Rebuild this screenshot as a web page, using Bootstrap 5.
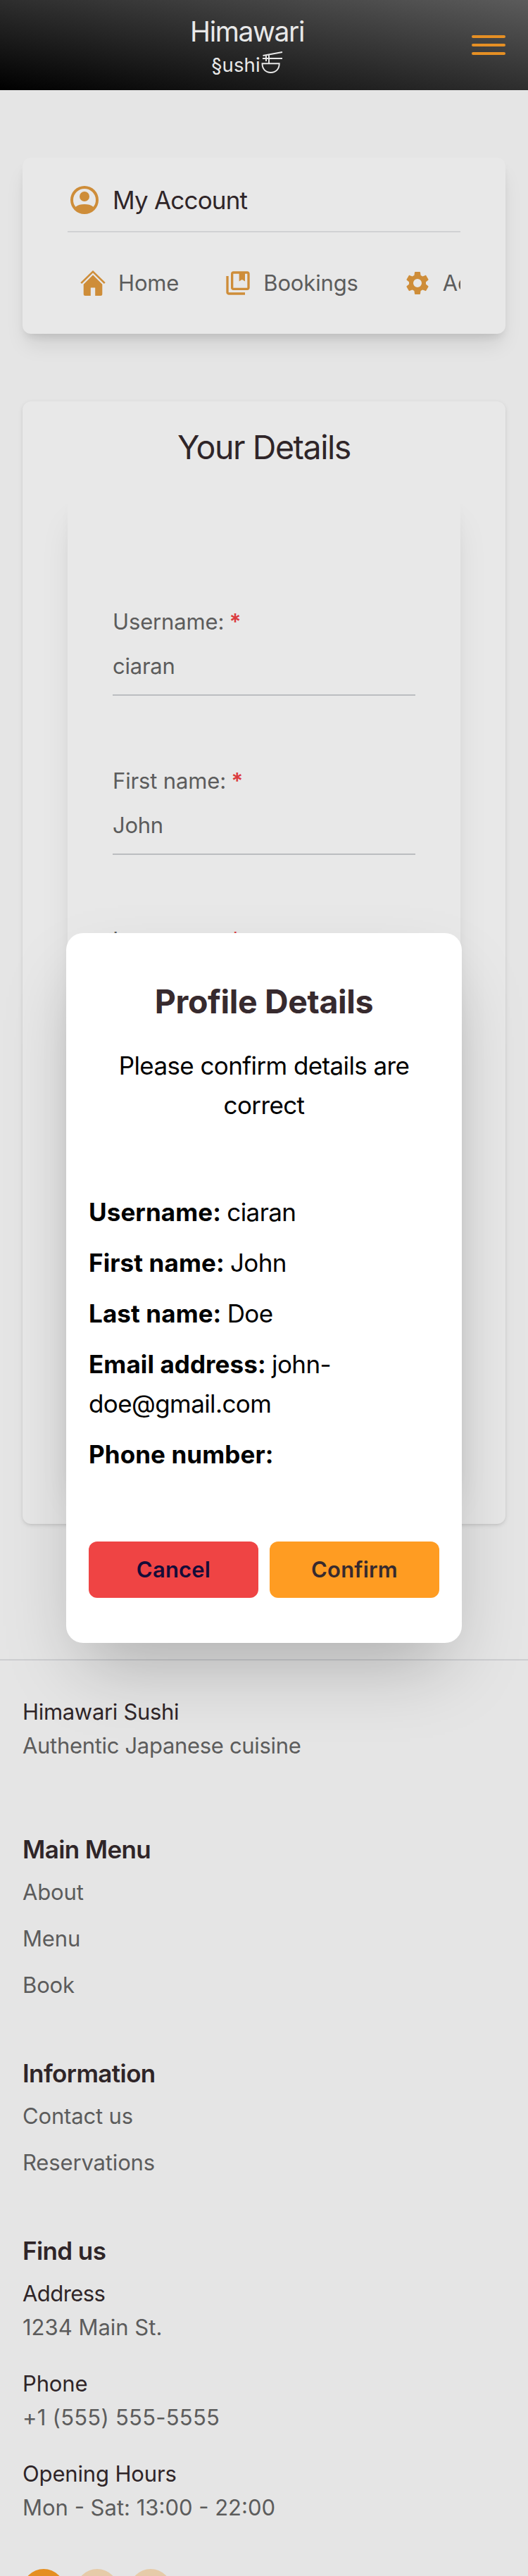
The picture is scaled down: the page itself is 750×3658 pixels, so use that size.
<!DOCTYPE html>
<html lang="en">
<head>
<meta charset="utf-8">
<meta name="viewport" content="width=device-width, initial-scale=1">
<title>Himawari Sushi - My Account</title>
<link href="https://cdn.jsdelivr.net/npm/bootstrap@5.3.0/dist/css/bootstrap.min.css" rel="stylesheet">
<style>
  body{font-family:Inter,"Liberation Sans",sans-serif;font-size:31px;line-height:48px;letter-spacing:-.15px;background:#e5e5e5;color:#5c5c5c;height:3658px;overflow:hidden}
  .ink{color:#2f2528}
  .topbar{height:128px;padding:0 32px;background:linear-gradient(to top right,#000,#5b5b5b);color:#e8e8e8}
  .brand-name{font-size:39px;line-height:56px;letter-spacing:-1.4px;margin-top:1px}
  .brand-sub{font-size:27.5px;line-height:40px;letter-spacing:.1px;margin-top:-1px}
  .burger{width:48px;height:28px}
  .burger span{height:4px;border-radius:2px;background:#e58f24}
  .panel{background:#e8e8e8;border-radius:12px;margin:0 32px}
  .account{margin-top:96px;height:250px;padding:36px 64px 0;box-shadow:0 20px 30px -6px rgba(0,0,0,.1),0 8px 12px -4px rgba(0,0,0,.1)}
  .account-title{font-size:35px;letter-spacing:-.8px;gap:16px;padding-bottom:20px;border-bottom:2px solid #d0d1d3}
  .account-nav{gap:64px;padding:52px 0 52px 16px;overflow:hidden}
  .account-nav a{gap:16px;line-height:40px;color:inherit;flex:none}
  .account svg{flex:none;fill:#ce8d39}
  .details{margin-top:96px;height:1594px;padding:33px 64px 0;box-shadow:0 2px 6px rgba(0,0,0,.1),0 2px 4px -2px rgba(0,0,0,.1)}
  .details h2{font-size:46.5px;line-height:64px;letter-spacing:-1.45px;font-weight:400;margin:0 0 29px}
  .form-sheet{height:1404px;padding:163px 64px 0;background:#e8e8e8;border-radius:12px;box-shadow:0 40px 50px -10px rgba(0,0,0,.1),0 16px 20px -12px rgba(0,0,0,.1)}
  .field{margin-bottom:97px}
  .field .value{margin-top:15px;padding-bottom:16px;border-bottom:2px solid #bbbdc0;letter-spacing:-.25px}
  .req{color:#db3b3e;font-weight:600;margin-left:-1px}
  .site-footer{margin-top:192px;padding:49px 32px 0;border-top:2px solid #cdced1}
  .site-footer h3{font-size:35px;line-height:56px;letter-spacing:-.6px;font-weight:600;margin:73px 0 9px}
  .site-footer h3.first{margin-top:95px}
  .tight{letter-spacing:-.32px}
  .tighter{letter-spacing:-.57px}
  .loose{letter-spacing:.25px}
  .even{letter-spacing:0}
  .links{gap:18px}
  .entry{margin-bottom:32px}
  .dots{gap:16px;margin-top:63px}
  .dots i{width:60px;height:60px;border-radius:50%;background:#e6cba9}
  .dots i.on{background:#e58f22}
  .confirm-box{top:1325px;left:94px;width:562px;height:1008px;padding:65px 32px 0;border-radius:24px;background:#fff;color:#000;font-size:35px;line-height:56px;letter-spacing:-.6px;box-shadow:0 50px 100px -24px rgba(0,0,0,.25)}
  .confirm-box h1{font-size:46.5px;line-height:64px;letter-spacing:-.37px;font-weight:700;color:#372a2e;margin:0 0 31px}
  .confirm-box .ask{margin:0 32px 96px}
  .confirm-box p{margin-bottom:16px}
  .confirm-box b{font-weight:700;letter-spacing:.1px;margin-right:-1px}
  .actions{margin-top:96px;gap:16px}
  .actions .btn{height:80px;border-radius:12px;border:0;font-size:31px;font-weight:600;letter-spacing:.2px}
  .btn-cancel,.btn-cancel:hover{background:#ef4444;color:#150c38}
  .btn-confirm,.btn-confirm:hover{background:#ff9c22;color:#372a2e}
</style>
</head>
<body class="position-relative">

<header class="topbar d-flex align-items-center">
  <div class="flex-grow-1 text-center">
    <div class="brand-name">Himawari</div>
    <div class="brand-sub d-flex justify-content-center">§ushi<svg width="32" height="32" viewBox="0 0 32 32" fill="none" stroke="#e8e8e8" stroke-width="1.9"><path d="M3.500 7 31 2M3 11h28M8 6.500V15M12 5.500V18M2.500 18.300h24.200c0 8-5 12.700-12.100 12.700S2.500 26.300 2.500 18.300z"/></svg></div>
  </div>
  <div class="burger d-flex flex-column justify-content-between"><span></span><span></span><span></span></div>
</header>

<section class="panel account">
  <div class="account-title d-flex align-items-center ink">
    <svg width="48" height="48" viewBox="0 0 24 24"><path fill-rule="evenodd" d="M12 2a10 10 0 1 0 0 20 10 10 0 0 0 0-20zM5.700 16.900A8 8 0 1 1 18.300 16.900C16.700 15.500 14.400 15 12 15s-4.700.5-6.300 1.900z"/><circle cx="12" cy="9.500" r="3.500"/></svg>
    <span>My Account</span>
  </div>
  <nav class="account-nav d-flex">
    <a class="d-flex align-items-center text-decoration-none"><svg width="40" height="40" viewBox="0 0 40 40"><path d="M20 2 37.700 19.300 35.800 20.900 20 5.500 4.200 20.900 2.300 19.300z"/><path d="M20 8.500 33.300 21.700V35.500q0 2.500-2.500 2.500H23.200V26.500H16.800V38H9.200q-2.500 0-2.500-2.500V21.700z"/></svg><span>Home</span></a>
    <a class="d-flex align-items-center text-decoration-none"><svg width="40" height="40" viewBox="0 0 24 24"><path d="M4 6H2v14c0 1.100.9 2 2 2h14v-2H4z"/><path fill-rule="evenodd" d="M20 2H8c-1.100 0-2 .9-2 2v12c0 1.100.9 2 2 2h12c1.100 0 2-.9 2-2V4c0-1.100-.9-2-2-2zm0 14H8V4h5v6.500l2.500-1.500 2.500 1.500V4h2z"/></svg><span>Bookings</span></a>
    <a class="d-flex align-items-center text-decoration-none"><svg width="40" height="40" viewBox="0 0 24 24"><path d="M19.140 12.940c.04-.3.060-.61.060-.94 0-.32-.02-.64-.07-.94l2.030-1.580c.18-.14.23-.41.120-.61l-1.920-3.320c-.12-.22-.37-.29-.59-.22l-2.390.96c-.5-.38-1.030-.7-1.620-.94l-.36-2.540c-.04-.24-.24-.41-.48-.41h-3.840c-.24 0-.43.17-.47.41l-.36 2.540c-.59.24-1.130.57-1.620.94l-2.390-.96c-.22-.08-.47 0-.59.22L2.740 8.870c-.12.21-.08.47.120.61l2.030 1.580c-.05.3-.09.63-.09.94s.02.64.07.94l-2.030 1.580c-.18.14-.23.41-.12.61l1.920 3.320c.12.22.37.29.59.22l2.390-.96c.5.38 1.030.7 1.620.94l.36 2.540c.05.24.24.41.48.41h3.840c.24 0 .44-.17.47-.41l.36-2.540c.59-.24 1.130-.56 1.620-.94l2.390.96c.22.08.47 0 .59-.22l1.920-3.320c.12-.22.07-.47-.12-.61l-2.010-1.580zM12 15.600A3.600 3.600 0 1 1 12 8.400a3.600 3.600 0 0 1 0 7.200z"/></svg><span>Account</span></a>
  </nav>
</section>

<section class="panel details">
  <h2 class="text-center ink">Your Details</h2>
  <div class="form-sheet">
    <div class="field"><div>Username: <span class="req">*</span></div><div class="value">ciaran</div></div>
    <div class="field"><div>First name: <span class="req">*</span></div><div class="value">John</div></div>
    <div class="field"><div>Last name: <span class="req">*</span></div></div>
  </div>
</section>

<footer class="site-footer">
  <div class="ink tight">Himawari Sushi</div>
  <div class="tight">Authentic Japanese cuisine</div>
  <h3 class="ink first">Main Menu</h3>
  <div class="links d-flex flex-column"><span>About</span><span>Menu</span><span>Book</span></div>
  <h3 class="ink">Information</h3>
  <div class="links d-flex flex-column"><span>Contact us</span><span>Reservations</span></div>
  <h3 class="ink">Find us</h3>
  <div class="entry"><div class="ink tighter">Address</div><div class="even">1234 Main St.</div></div>
  <div class="entry"><div class="ink">Phone</div><div class="loose">+1 (555) 555-5555</div></div>
  <div><div class="ink">Opening Hours</div><div class="even">Mon - Sat: 13:00 - 22:00</div></div>
  <div class="dots d-flex"><i class="on"></i><i></i><i></i></div>
</footer>

<div class="confirm-box position-absolute" role="dialog">
  <h1 class="text-center">Profile Details</h1>
  <div class="ask text-center">Please confirm details are correct</div>
  <p><b>Username:</b> ciaran</p>
  <p><b>First name:</b> John</p>
  <p><b>Last name:</b> Doe</p>
  <p><b>Email address:</b> john-<br>doe@gmail.com</p>
  <p><b>Phone number:</b></p>
  <div class="actions d-flex">
    <button class="btn btn-cancel flex-fill w-50">Cancel</button>
    <button class="btn btn-confirm flex-fill w-50">Confirm</button>
  </div>
</div>

<script src="https://cdn.jsdelivr.net/npm/bootstrap@5.3.0/dist/js/bootstrap.bundle.min.js"></script>
</body>
</html>
